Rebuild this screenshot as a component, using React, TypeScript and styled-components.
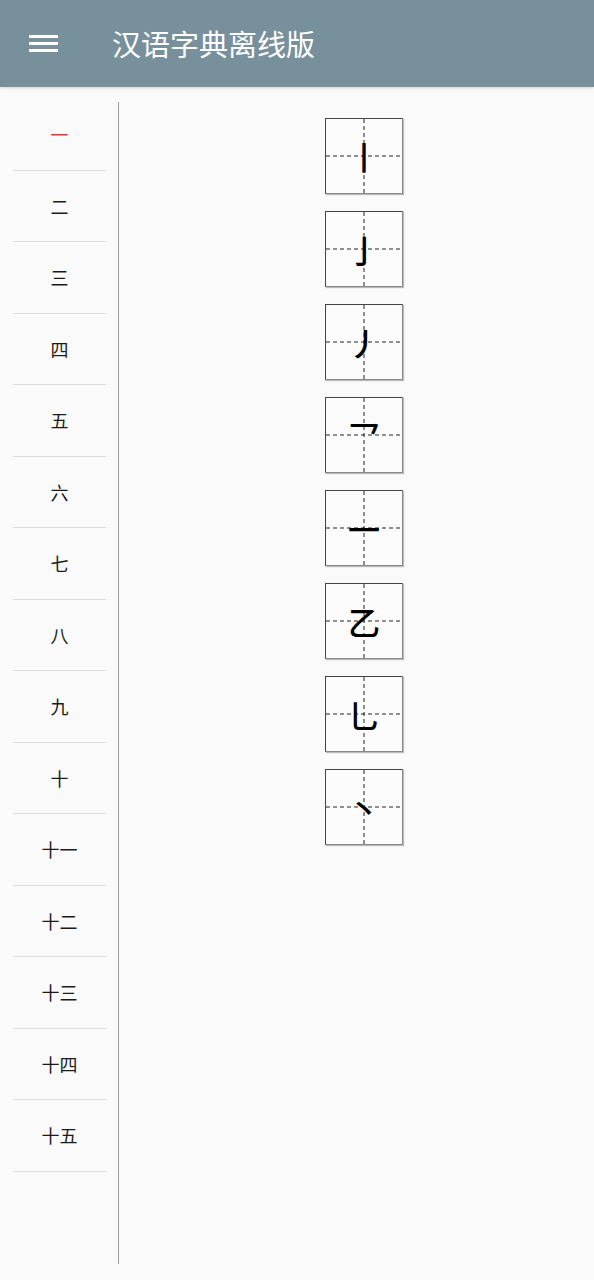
import React from "react";
import styled, { createGlobalStyle } from "styled-components";

const Global = createGlobalStyle`
  html, body { margin: 0; padding: 0; background: #fafafa; }
  body { font-family: "Noto Sans CJK SC", "Noto Sans", sans-serif; }
  * { box-sizing: border-box; }
`;

const Page = styled.div`
  width: 594px;
  height: 1280px;
  display: flex;
  flex-direction: column;
  background: #fafafa;
  overflow: hidden;
`;

const AppBar = styled.header`
  height: 87px;
  flex: none;
  background: #78909c;
  display: flex;
  align-items: center;
  padding-left: 29px;
  box-shadow: 0 1px 3px rgba(0, 0, 0, 0.15);
  position: relative;
  z-index: 1;
`;

const MenuButton = styled.div`
  width: 29px;
  height: 17px;
  display: flex;
  flex-direction: column;
  justify-content: space-between;
  margin-right: 54px;
`;

const MenuBar = styled.span`
  display: block;
  height: 3px;
  background: #fff;
`;

const Title = styled.h1`
  margin: 0;
  font-size: 29px;
  font-weight: 400;
  color: #fff;
  line-height: 1;
  font-family: "Noto Sans CJK SC", sans-serif;
`;

const Body = styled.div`
  flex: 1;
  display: flex;
  min-height: 0;
`;

const Sidebar = styled.ul`
  list-style: none;
  margin: 0;
  padding: 12px 0 0 13px;
  width: 106px;
  flex: none;
`;

const Item = styled.li<{ $active?: boolean }>`
  height: 71.5px;
  display: flex;
  align-items: center;
  justify-content: center;
  border-bottom: 1px solid #dcdcdc;
  font-size: 18px;
  color: ${(p) => (p.$active ? "#e53935" : "#1a1a1a")};
`;

const Divider = styled.div`
  width: 1px;
  background: #9e9e9e;
  margin: 15px 0 16px 12px;
  flex: none;
`;

const Strokes = styled.div`
  flex: 1;
  display: flex;
  flex-direction: column;
  align-items: center;
  gap: 17px;
  padding-top: 31px;
  padding-left: 15px;
`;

const Cell = styled.div`
  width: 78px;
  height: 76px;
  position: relative;
  border: 1px solid #444;
  border-right-color: #888;
  border-bottom-color: #888;
  background: #fcfcfc;
  box-shadow: 1px 1px 1px rgba(0, 0, 0, 0.25);
  display: flex;
  align-items: center;
  justify-content: center;
  font-size: 32px;
  color: #000;
  line-height: 1;
`;

const Guides = styled.svg`
  position: absolute;
  inset: 0;
  width: 100%;
  height: 100%;
`;

const Glyph = styled.span`
  position: relative;
  font-family: "Noto Sans CJK SC", sans-serif;
  font-weight: 500;
`;

const chapters = [
  "一", "二", "三", "四", "五", "六", "七", "八", "九", "十",
  "十一", "十二", "十三", "十四", "十五",
];

const strokes = ["丨", "亅", "丿", "乛", "一", "乙", "乚", "丶"];

export default function App() {
  return (
    <>
      <Global />
      <Page>
        <AppBar>
          <MenuButton>
            <MenuBar />
            <MenuBar />
            <MenuBar />
          </MenuButton>
          <Title>汉语字典离线版</Title>
        </AppBar>
        <Body>
          <Sidebar>
            {chapters.map((c, i) => (
              <Item key={c} $active={i === 0}>
                {c}
              </Item>
            ))}
          </Sidebar>
          <Divider />
          <Strokes>
            {strokes.map((s) => (
              <Cell key={s}>
                <Guides viewBox="0 0 76 74" preserveAspectRatio="none">
                  <line x1="38" y1="0" x2="38" y2="74" stroke="#222" strokeWidth="1" strokeDasharray="4 3" />
                  <line x1="0" y1="37" x2="76" y2="37" stroke="#222" strokeWidth="1" strokeDasharray="4 3" />
                </Guides>
                <Glyph>{s}</Glyph>
              </Cell>
            ))}
          </Strokes>
        </Body>
      </Page>
    </>
  );
}
